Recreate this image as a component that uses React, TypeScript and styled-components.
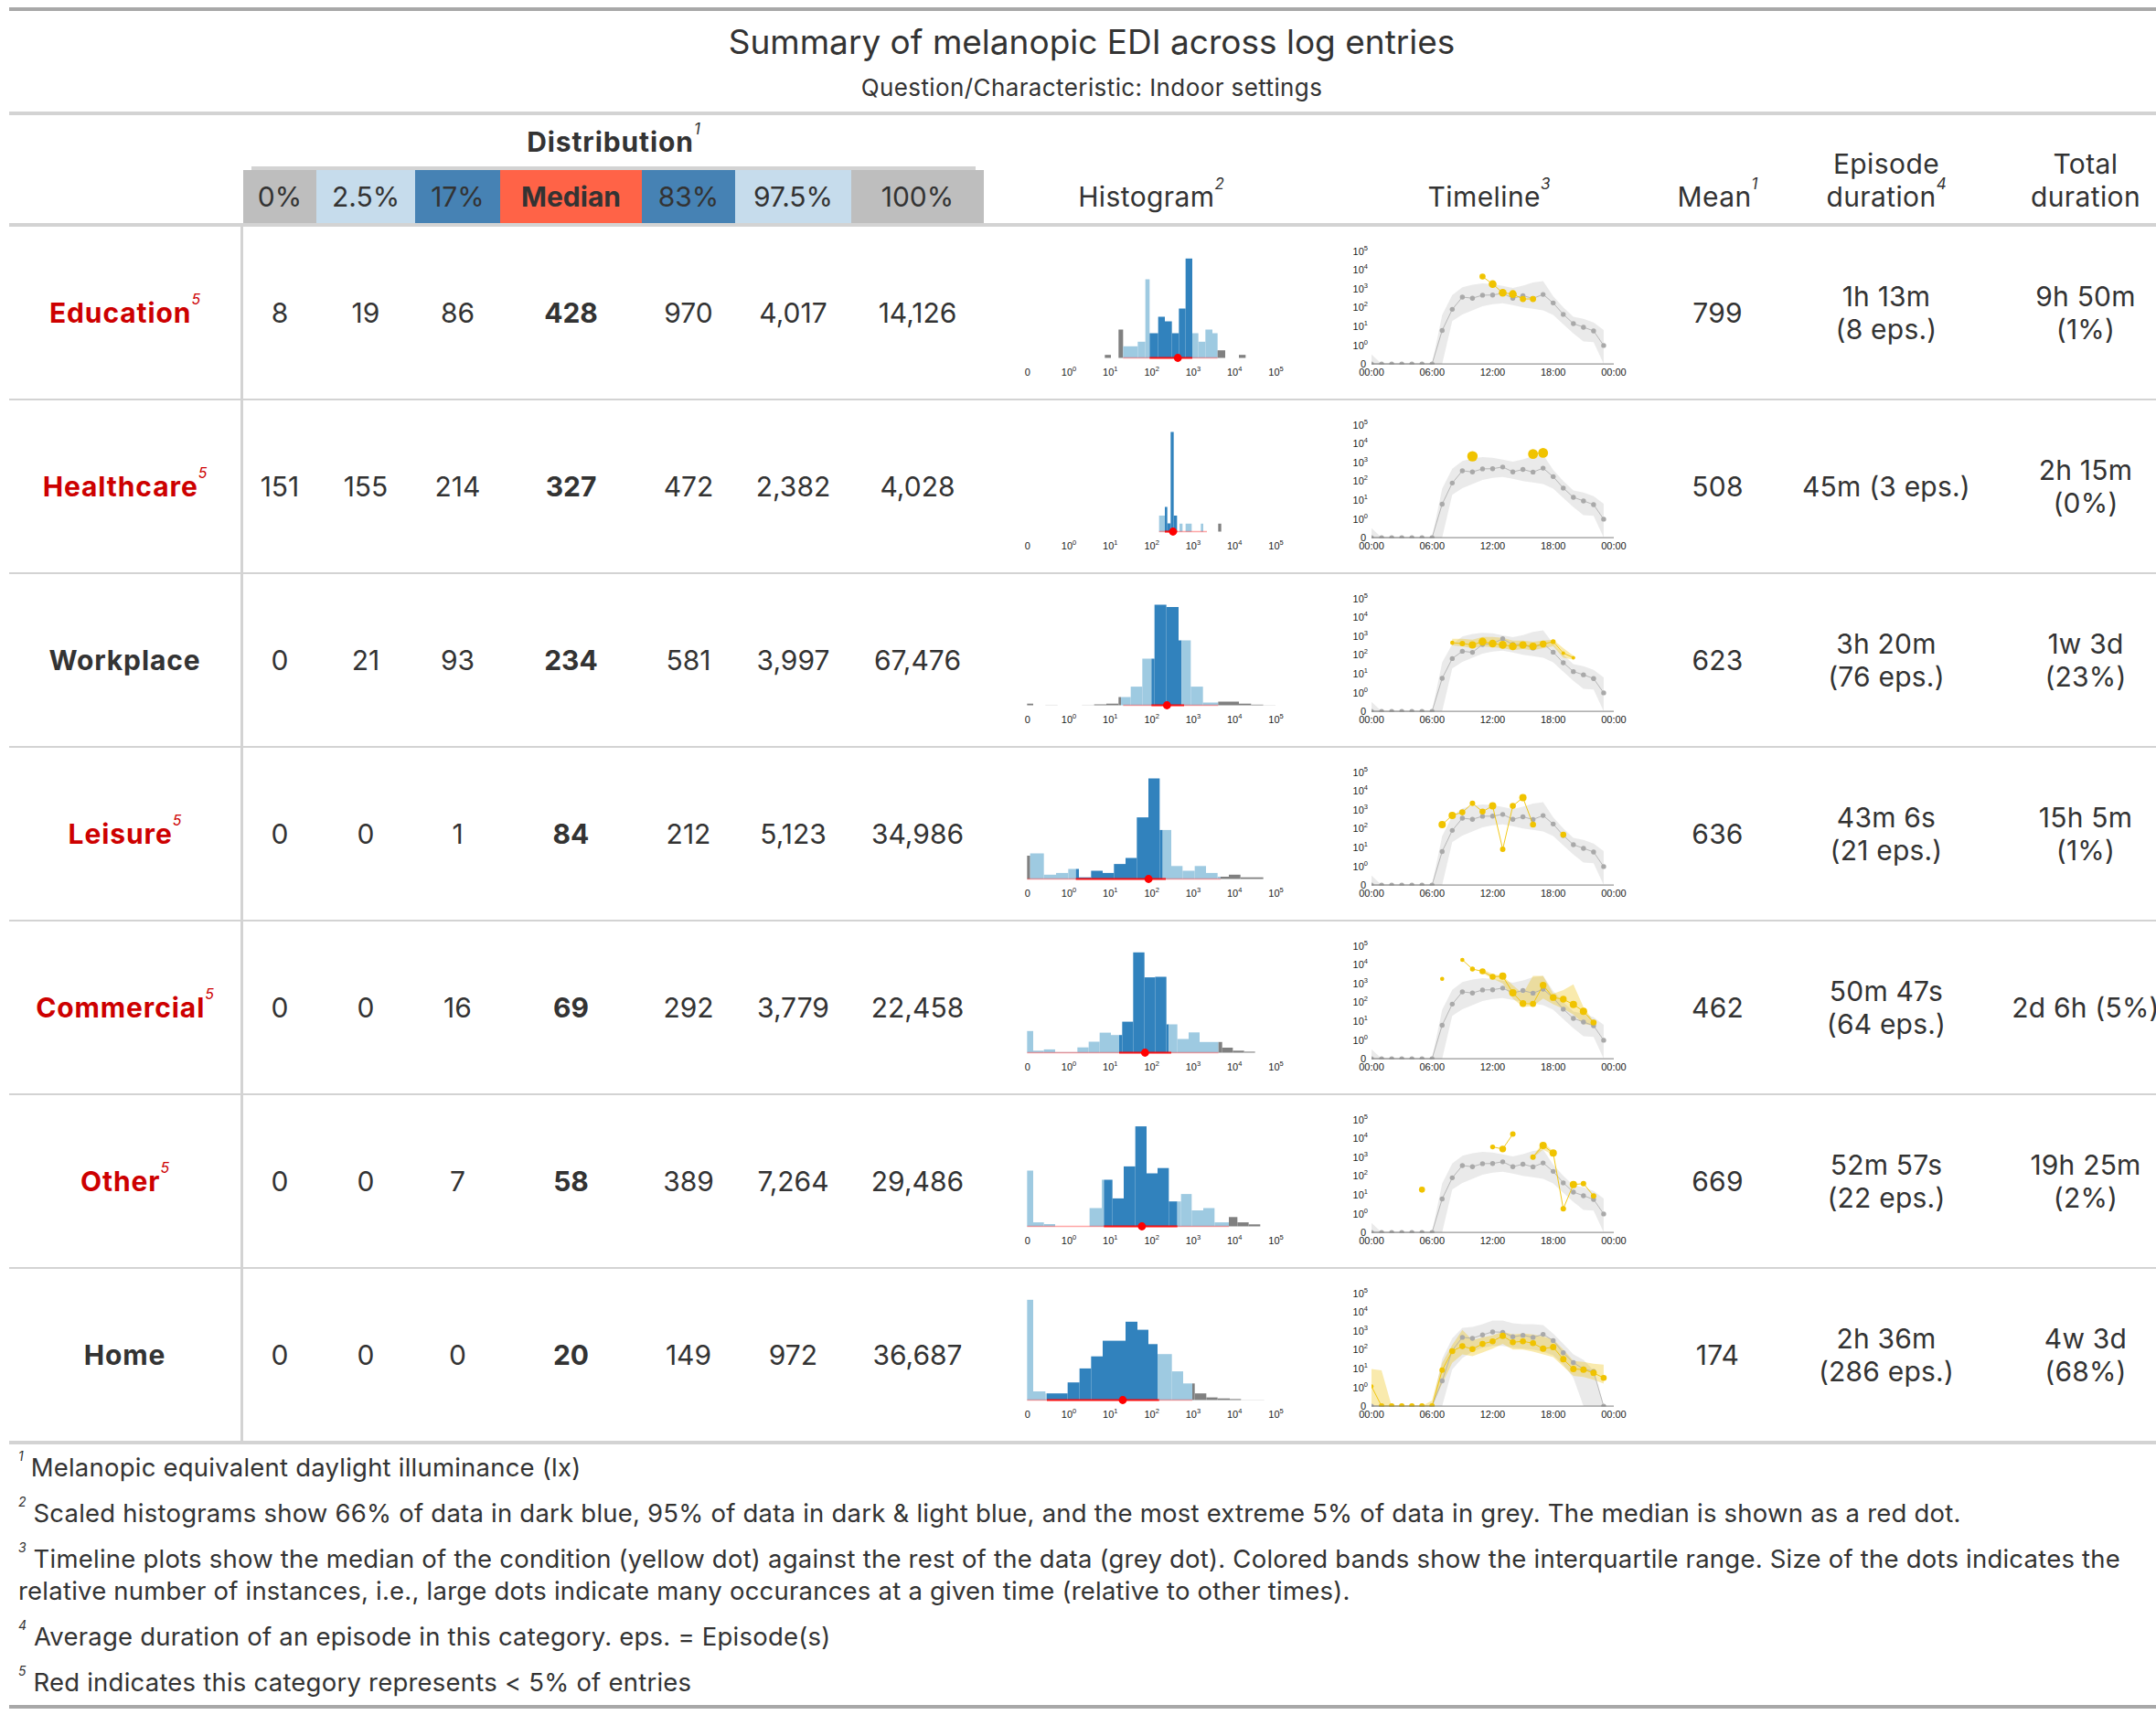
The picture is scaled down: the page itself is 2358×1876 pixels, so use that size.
import React from "react";
import styled, { createGlobalStyle } from "styled-components";

const GlobalStyle = createGlobalStyle`
  html, body { margin: 0; padding: 0; overflow: hidden; background: #ffffff; }
  body { font-family: Inter, "Noto Sans", "Liberation Sans", sans-serif; color: #333333; }
  * { box-sizing: border-box; }
`;

const COLS = "256px 80px 108px 93px 155px 102px 127px 145px 366px 373px 127px 242px 194px";

const Page = styled.div`
  padding: 8px 0 0 10px;
`;

const Table = styled.div`
  width: 2368px;
  border-top: 4px solid #a8a8a8;
  border-bottom: 4px solid #a8a8a8;
`;

const Heading = styled.div`
  text-align: center;
  border-bottom: 4px solid #d3d3d3;
  padding: 6px 0 8px;
`;

const Title = styled.div`
  font-size: 37px;
  line-height: 55px;
`;

const Subtitle = styled.div`
  font-size: 26px;
  line-height: 37px;
  letter-spacing: 0.4px;
  padding-top: 4px;
`;

const HeaderGrid = styled.div`
  display: grid;
  grid-template-columns: ${COLS};
  grid-template-rows: 60px 58px;
  border-bottom: 4px solid #d3d3d3;
  font-size: 30px;
  line-height: 36px;
`;

const Spanner = styled.div`
  grid-column: 2 / 9;
  grid-row: 1;
  align-self: end;
  padding: 0 9px;
`;

const SpannerLabel = styled.div`
  font-weight: 700;
  text-align: center;
  letter-spacing: 0.9px;
  padding-bottom: 9px;
  border-bottom: 4px solid #d3d3d3;
`;

const QuantLabel = styled.div<{ $bg: string; $bold?: boolean; $col: number }>`
  grid-row: 2;
  grid-column: ${(p) => p.$col};
  background: ${(p) => p.$bg};
  font-weight: ${(p) => (p.$bold ? 700 : 400)};
  display: flex;
  align-items: center;
  justify-content: center;
`;

const ColLabel = styled.div<{ $col: number }>`
  grid-row: 1 / 3;
  grid-column: ${(p) => p.$col};
  align-self: end;
  text-align: center;
  letter-spacing: 0.4px;
  padding-bottom: 11px;
`;

const Mark = styled.span<{ $size?: number; $raise?: number }>`
  font-size: ${(p) => p.$size ?? 17}px;
  font-style: italic;
  font-weight: 400;
  letter-spacing: 0;
  line-height: 0;
  vertical-align: ${(p) => p.$raise ?? 19}px;
  white-space: nowrap;
`;

const BodyRow = styled.div`
  display: grid;
  grid-template-columns: ${COLS};
  height: 190px;
  border-bottom: 2px solid #d3d3d3;
  font-size: 30px;
  line-height: 36px;
`;

const StubCell = styled.div<{ $rare: boolean }>`
  border-right: 3px solid #d3d3d3;
  display: flex;
  align-items: center;
  justify-content: center;
  font-weight: 700;
  letter-spacing: 0.9px;
  color: ${(p) => (p.$rare ? "#cd0000" : "#333333")};
`;

const ValueCell = styled.div<{ $bold?: boolean }>`
  display: flex;
  align-items: center;
  justify-content: center;
  font-weight: ${(p) => (p.$bold ? 700 : 400)};
`;

const ChartCell = styled.div<{ $pad: number }>`
  display: flex;
  align-items: flex-start;
  padding-left: ${(p) => p.$pad}px;
`;

const TextCell = styled.div`
  display: flex;
  align-items: center;
  justify-content: center;
  text-align: center;
  white-space: nowrap;
  letter-spacing: 0.2px;
`;

const ChartSvg = styled.svg`
  display: block;
  overflow: visible;
`;

const Footnotes = styled.div`
  border-top: 2px solid #d3d3d3;
  font-size: 27.5px;
  line-height: 35px;
  letter-spacing: 0.22px;
`;

const Footnote = styled.div`
  padding: 8px 10px 7px 10px;
`;

/* ---------------- data ---------------- */

type Bar = [number, number, number, "d" | "l" | "g" | "f"];

interface HistData {
  bars: Bar[];
  thin: [number, number];
  thick: [number, number];
  median: number;
}

type YPoint = [number, number, number];

interface TimeData {
  grey: number[];
  gUp: number[];
  gLo: number[];
  yellow: YPoint[];
  yBand?: { start: number; up: number[]; lo: number[] };
}

interface RowData {
  name: string;
  rare: boolean;
  q: string[];
  mean: string;
  episode: string[];
  total: string[];
  hist: HistData;
  time: TimeData;
}

const G_BASE = [-1, -1, -1, -1, -1, -1, -1, 0.78, 1.9, 2.55, 2.49, 2.65, 2.66, 2.75, 2.49, 2.62, 2.48, 2.69, 2.24, 1.63, 1.14, 0.95, 0.75, -0.02];
const U_BASE = [-0.5, -1, -1, -1, -1, -1, -1, 1.6, 2.66, 3.07, 3.2, 3.27, 3.24, 3.14, 3.04, 3.15, 3.32, 3.4, 2.6, 2.0, 1.5, 1.4, 1.2, 0.8];
const L_BASE = [-1, -1, -1, -1, -1, -1, -1, -1, 1.27, 1.63, 1.85, 2.06, 2.17, 2.22, 2.12, 2.0, 1.93, 1.85, 1.6, 1.1, 0.62, 0.2, 0.16, -1];

const G_WORK = [-1, -1, -1, -1, -1, -1, -1, 0.75, 1.8, 2.19, 2.13, 2.55, 2.6, 2.85, 2.55, 2.55, 2.36, 2.6, 2.14, 1.58, 1.11, 0.94, 0.74, -0.02];
const U_WORK = U_BASE.map((v, i) => (i >= 8 && i <= 17 ? v - 0.1 : v));

const G_HOME = [-1, -1, -1, -1, -1, -1, -1, 0.34, 1.95, 2.65, 2.6, 2.78, 2.94, 2.92, 2.68, 2.76, 2.65, 2.81, 2.48, 1.83, 1.31, 0.97, 0.84, -1];
const U_HOME = [-1, -1, -1, -1, -1, -1, -1, 1.5, 2.6, 3.15, 3.2, 3.35, 3.55, 3.55, 3.4, 3.35, 3.35, 3.3, 2.85, 2.3, 1.75, 1.45, 0.9, -1];
const L_HOME = [-1, -1, -1, -1, -1, -1, -1, -1, 0.95, 1.55, 1.9, 2.1, 2.2, 2.2, 2.1, 2.05, 2.0, 1.9, 1.7, 1.2, 0.5, -1, -1, -1];

const ROWS: RowData[] = [
  {
    name: "Education",
    rare: true,
    q: ["8", "19", "86", "428", "970", "4,017", "14,126"],
    mean: "799",
    episode: ["1h 13m", "(8 eps.)"],
    total: ["9h 50m", "(1%)"],
    hist: {
      bars: [
        [325, 345, 3.3, "g"], [370, 385, 31, "g"], [385, 433, 12.7, "l"], [433, 458, 17.7, "l"],
        [458, 472, 86, "l"], [472, 500, 27, "d"], [500, 522, 45, "d"], [522, 545, 40, "d"],
        [545, 568, 27, "d"], [568, 590, 54, "d"], [590, 612, 108.7, "d"], [612, 632, 27, "l"],
        [632, 655, 17.7, "l"], [655, 678, 31, "l"], [678, 695, 27, "l"], [695, 720, 8.3, "g"],
        [765, 787, 3.3, "g"],
      ],
      thin: [385, 695],
      thick: [472, 612],
      median: 428,
    },
    time: {
      grey: G_BASE,
      gUp: U_BASE,
      gLo: L_BASE,
      yellow: [[11, 3.64, 3.3], [12, 3.24, 4.3], [13, 2.78, 4.3], [14, 2.71, 4.3], [15, 2.45, 3.4], [16, 2.45, 3.4]],
    },
  },
  {
    name: "Healthcare",
    rare: true,
    q: ["151", "155", "214", "327", "472", "2,382", "4,028"],
    mean: "508",
    episode: ["45m (3 eps.)"],
    total: ["2h 15m", "(0%)"],
    hist: {
      bars: [
        [503, 522, 17.5, "l"], [522, 530, 27, "d"], [530, 541, 9, "d"], [541, 551, 109, "d"],
        [551, 562, 17.5, "d"], [570, 580, 8.7, "l"], [590, 610, 8.7, "l"], [640, 648, 8.7, "l"],
        [697, 707, 8.7, "g"],
      ],
      thin: [503, 660],
      thick: [522, 562],
      median: 327,
    },
    time: {
      grey: G_BASE,
      gUp: U_BASE,
      gLo: L_BASE,
      yellow: [[10, 3.32, 5.7], [16, 3.44, 5.4], [17, 3.5, 5.4]],
    },
  },
  {
    name: "Workplace",
    rare: false,
    q: ["0", "21", "93", "234", "581", "3,997", "67,476"],
    mean: "623",
    episode: ["3h 20m", "(76 eps.)"],
    total: ["1w 3d", "(23%)"],
    hist: {
      bars: [
        [70, 90, 1.8, "g"], [130, 170, 0.6, "f"], [250, 290, 0.6, "f"], [290, 330, 1, "g"],
        [330, 370, 1.8, "g"], [370, 378, 9, "g"], [378, 410, 9, "l"], [410, 448, 20.4, "l"],
        [448, 478, 51, "l"], [478, 488, 51, "d"], [488, 527, 110, "d"], [527, 567, 107.5, "d"],
        [567, 577, 71, "d"], [577, 607, 71, "l"], [607, 647, 20.4, "l"], [647, 697, 3, "l"],
        [697, 765, 4, "g"], [765, 805, 1.8, "g"], [805, 845, 0.7, "g"], [845, 885, 0.5, "f"],
      ],
      thin: [385, 697],
      thick: [478, 585],
      median: 234,
    },
    time: {
      grey: G_WORK,
      gUp: U_WORK,
      gLo: L_BASE,
      yellow: [
        [8, 2.64, 2.3], [9, 2.6, 3], [10, 2.53, 4], [11, 2.7, 4.3], [12, 2.6, 4.3], [13, 2.53, 4.3],
        [14, 2.45, 4.3], [15, 2.53, 4], [16, 2.45, 4], [17, 2.57, 3.7], [18, 2.7, 2.7], [19, 2.09, 2],
        [20, 1.85, 2],
      ],
      yBand: {
        start: 8,
        up: [2.85, 2.85, 2.8, 2.95, 2.95, 2.9, 2.75, 2.75, 2.7, 2.75, 2.8, 2.35, 1.95],
        lo: [2.5, 2.45, 2.35, 2.45, 2.4, 2.35, 2.25, 2.3, 2.25, 2.35, 2.45, 1.85, 1.75],
      },
    },
  },
  {
    name: "Leisure",
    rare: true,
    q: ["0", "0", "1", "84", "212", "5,123", "34,986"],
    mean: "636",
    episode: ["43m 6s", "(21 eps.)"],
    total: ["15h 5m", "(1%)"],
    hist: {
      bars: [
        [70, 80, 25.5, "g"], [80, 125, 28, "l"], [125, 165, 4.7, "l"], [165, 205, 6.6, "l"],
        [205, 230, 11, "l"], [230, 240, 11, "d"], [240, 280, 1.8, "d"], [280, 318, 9, "d"],
        [318, 355, 6.6, "d"], [355, 393, 16.4, "d"], [393, 430, 23, "d"], [430, 468, 67.4, "d"],
        [468, 505, 110, "d"], [505, 515, 53.6, "d"], [515, 543, 53.6, "l"], [543, 580, 14.2, "l"],
        [580, 620, 9, "l"], [620, 657, 14.2, "l"], [657, 695, 6.6, "l"], [695, 705, 2.5, "l"],
        [705, 732, 2.5, "g"], [732, 770, 4.7, "g"], [770, 845, 1.8, "g"],
      ],
      thin: [70, 705],
      thick: [230, 525],
      median: 84,
    },
    time: {
      grey: G_BASE,
      gUp: U_BASE,
      gLo: L_BASE,
      yellow: [
        [7, 2.21, 4], [8, 2.7, 4], [9, 2.86, 3.3], [10, 3.34, 3], [11, 2.9, 3.3], [12, 3.2, 4],
        [13, 0.9, 3], [14, 3.2, 3.3], [15, 3.64, 4], [16, 2.21, 3.3], [19, 1.67, 3.3],
      ],
    },
  },
  {
    name: "Commercial",
    rare: true,
    q: ["0", "0", "16", "69", "292", "3,779", "22,458"],
    mean: "462",
    episode: ["50m 47s", "(64 eps.)"],
    total: ["2d 6h (5%)"],
    hist: {
      bars: [
        [70, 90, 23.7, "l"], [90, 125, 2.2, "l"], [125, 162, 3.6, "l"], [162, 235, 0.7, "l"],
        [235, 272, 5.8, "l"], [272, 308, 12, "l"], [308, 345, 21.9, "l"], [345, 372, 19.3, "l"],
        [372, 382, 19.3, "d"], [382, 418, 33.9, "d"], [418, 455, 109.7, "d"], [455, 490, 82.4, "d"],
        [490, 527, 83, "d"], [527, 535, 31, "d"], [535, 563, 31, "l"], [563, 600, 15, "l"],
        [600, 636, 22.2, "l"], [636, 698, 11.7, "l"], [698, 710, 11.7, "g"], [710, 745, 5.5, "g"],
        [745, 782, 2.2, "g"], [782, 818, 1.1, "g"],
      ],
      thin: [70, 698],
      thick: [372, 543],
      median: 69,
    },
    time: {
      grey: G_BASE,
      gUp: U_BASE,
      gLo: L_BASE,
      yellow: [
        [7, 3.24, 2.3], [9, 4.25, 2.3], [10, 3.76, 2.7], [11, 3.64, 3.3], [12, 3.35, 3.3], [13, 3.38, 4],
        [14, 2.5, 4], [15, 1.93, 3.7], [16, 1.91, 3.3], [17, 2.9, 3.7], [18, 2.25, 3.7], [19, 2.16, 3.7],
        [20, 1.88, 4], [21, 1.52, 4], [22, 0.92, 3.3],
      ],
      yBand: {
        start: 11,
        up: [3.75, 3.5, 3.4, 2.9, 2.45, 3.4, 3.4, 2.45, 2.65, 2.95, 1.75, 1.0],
        lo: [3.55, 3.25, 3.0, 2.2, 1.75, 1.8, 2.2, 1.9, 1.65, 1.35, 0.85, 0.75],
      },
    },
  },
  {
    name: "Other",
    rare: true,
    q: ["0", "0", "7", "58", "389", "7,264", "29,486"],
    mean: "669",
    episode: ["52m 57s", "(22 eps.)"],
    total: ["19h 25m", "(2%)"],
    hist: {
      bars: [
        [70, 90, 61, "l"], [90, 125, 4.4, "l"], [125, 162, 2.5, "l"], [275, 315, 20, "l"],
        [315, 322, 51, "l"], [322, 350, 51, "d"], [350, 387, 30.6, "d"], [387, 425, 65.6, "d"],
        [425, 462, 109.4, "d"], [462, 498, 58, "d"], [498, 535, 63.8, "d"], [535, 563, 27.3, "d"],
        [563, 575, 27.3, "l"], [575, 610, 35.4, "l"], [610, 648, 17.5, "l"], [648, 685, 20, "l"],
        [685, 732, 4.4, "l"], [732, 760, 10.2, "g"], [760, 797, 4.4, "g"], [797, 835, 2.2, "g"],
      ],
      thin: [70, 732],
      thick: [322, 563],
      median: 58,
    },
    time: {
      grey: G_BASE,
      gUp: U_BASE,
      gLo: L_BASE,
      yellow: [
        [5, 1.27, 3.3], [12, 3.54, 2.7], [13, 3.43, 3.7], [14, 4.22, 3], [16, 3.0, 3], [17, 3.62, 4],
        [18, 3.21, 4], [19, 0.26, 3], [20, 1.54, 4], [21, 1.59, 3], [22, 0.94, 3],
      ],
      yBand: { start: 16, up: [3.05, 3.8, 3.3], lo: [2.95, 3.4, 3.1] },
    },
  },
  {
    name: "Home",
    rare: false,
    q: ["0", "0", "0", "20", "149", "972", "36,687"],
    mean: "174",
    episode: ["2h 36m", "(286 eps.)"],
    total: ["4w 3d", "(68%)"],
    hist: {
      bars: [
        [70, 90, 109.7, "l"], [90, 130, 9.5, "l"], [130, 135, 7.3, "l"], [135, 203, 7.3, "d"],
        [203, 242, 19.3, "d"], [242, 280, 34.6, "d"], [280, 318, 47.8, "d"], [318, 393, 64.9, "d"],
        [393, 432, 85.7, "d"], [432, 468, 76.9, "d"], [468, 498, 61.2, "d"], [498, 545, 50.3, "l"],
        [545, 582, 31.4, "l"], [582, 612, 18.2, "l"], [612, 620, 18.2, "g"], [620, 658, 7.3, "g"],
        [658, 695, 2.9, "g"], [695, 735, 1.8, "g"], [735, 772, 1.1, "g"], [772, 848, 0.5, "f"],
      ],
      thin: [70, 612],
      thick: [135, 503],
      median: 20,
    },
    time: {
      grey: G_HOME,
      gUp: U_HOME,
      gLo: L_HOME,
      yellow: [
        [0, 0.05, 2.3], [1, -1, 3], [2, -1, 3], [3, -1, 3], [4, -1, 3], [5, -1, 3], [6, -1, 3],
        [7, 0.91, 3], [8, 1.92, 3.3], [9, 2.18, 3.3], [10, 2.03, 3.3], [11, 2.3, 3.3], [12, 2.44, 3.3],
        [13, 2.73, 3.5], [14, 2.39, 3.3], [15, 2.44, 3.3], [16, 2.34, 3.3], [17, 2.05, 3.5], [18, 2.13, 3.5],
        [19, 1.49, 3.5], [20, 0.97, 3.5], [21, 0.94, 3.5], [22, 0.76, 3.5], [23, 0.5, 3.3],
      ],
      yBand: {
        start: 0,
        up: [0.97, 0.9, -1, -1, -1, -1, -0.7, 1.3, 2.25, 3.05, 2.5, 2.65, 2.75, 2.95, 2.8, 2.85, 2.8, 2.7, 2.55, 2.0, 1.4, 1.35, 1.25, 1.2],
        lo: [-1, -1, -1, -1, -1, -1, -1, 0.2, 1.3, 1.75, 1.65, 1.85, 2.05, 2.3, 2.0, 2.0, 1.9, 1.75, 1.6, 1.1, 0.6, 0.55, 0.4, 0.2],
      },
    },
  },
];

const QUANTS: { label: string; bg: string; bold?: boolean }[] = [
  { label: "0%", bg: "#bebebe" },
  { label: "2.5%", bg: "#c6dcec" },
  { label: "17%", bg: "#4682b4" },
  { label: "Median", bg: "#ff6347", bold: true },
  { label: "83%", bg: "#4682b4" },
  { label: "97.5%", bg: "#c6dcec" },
  { label: "100%", bg: "#bebebe" },
];

const BAR_COLORS: Record<string, string> = {
  d: "#3182bd",
  l: "#9ecae1",
  g: "#808080",
  f: "#dcdcdc",
};

/* ---------------- charts ---------------- */

const AXIS_FONT = "'Liberation Sans', Arial, sans-serif";
const H_BASE = 143.5;
const hx = (L: number) => 69 + 45.3 * L;

function Histogram({ d }: { d: HistData }) {
  const mx = hx(Math.log10(d.median));
  return (
    <ChartSvg width={340} height={188} viewBox="0 0 340 188">
      {d.bars.map(([a, b, h, c], i) => (
        <rect key={i} x={a / 3} y={H_BASE - h} width={(b - a) / 3} height={h} fill={BAR_COLORS[c]} />
      ))}
      <line x1={d.thin[0] / 3} x2={d.thin[1] / 3} y1={H_BASE} y2={H_BASE} stroke="rgba(255,0,0,0.35)" strokeWidth={1.4} />
      <line x1={d.thick[0] / 3} x2={d.thick[1] / 3} y1={H_BASE} y2={H_BASE} stroke="rgba(255,0,0,0.85)" strokeWidth={2.2} />
      <circle cx={mx} cy={H_BASE} r={4.4} fill="#ff0000" />
      <g fontFamily={AXIS_FONT} fontSize={11} fill="#1a1a1a" textAnchor="middle">
        <text x={hx(-1)} y={163}>0</text>
        {[0, 1, 2, 3, 4, 5].map((L) => (
          <text key={L} x={hx(L)} y={163}>
            10<tspan dy={-5} fontSize={7.5}>{L}</tspan>
          </text>
        ))}
      </g>
    </ChartSvg>
  );
}

const tx = (h: number) => 40 + 11.04 * h;
const ty = (L: number) => 129.5 - 20.6 * L;

function bandPath(start: number, up: number[], lo: number[]) {
  const top = up.map((v, i) => `${tx(start + i).toFixed(1)},${ty(v).toFixed(1)}`);
  const bottom = lo
    .map((v, i) => `${tx(start + i).toFixed(1)},${ty(v).toFixed(1)}`)
    .reverse();
  return [...top, ...bottom].join(" ");
}

function Timeline({ d, id }: { d: TimeData; id: string }) {
  const yellowSegs: [YPoint, YPoint][] = [];
  for (let i = 1; i < d.yellow.length; i++) {
    if (d.yellow[i][0] - d.yellow[i - 1][0] === 1) yellowSegs.push([d.yellow[i - 1], d.yellow[i]]);
  }
  const clipId = `tl-clip-${id}`;
  return (
    <ChartSvg width={340} height={188} viewBox="0 0 340 188">
      <defs>
        <clipPath id={clipId}>
          <rect x={40} y={0} width={270} height={ty(-1) + 0.5} />
        </clipPath>
      </defs>
      <g clipPath={`url(#${clipId})`}>
        <polygon points={bandPath(0, d.gUp, d.gLo)} fill="rgba(180,180,180,0.28)" />
        {d.yBand && (
          <polygon points={bandPath(d.yBand.start, d.yBand.up, d.yBand.lo)} fill="rgba(236,190,0,0.32)" />
        )}
        <polyline
          points={d.grey.map((v, h) => `${tx(h).toFixed(1)},${ty(v).toFixed(1)}`).join(" ")}
          fill="none"
          stroke="#a9a9a9"
          strokeWidth={0.8}
        />
        {d.grey.map((v, h) => (
          <circle key={h} cx={tx(h)} cy={ty(v)} r={2.7} fill="#a9a9a9" />
        ))}
        {yellowSegs.map(([a, b], i) => (
          <line key={i} x1={tx(a[0])} y1={ty(a[1])} x2={tx(b[0])} y2={ty(b[1])} stroke="#f0c300" strokeWidth={0.9} />
        ))}
        {d.yellow.map(([h, v, r], i) => (
          <circle key={i} cx={tx(h)} cy={ty(v)} r={r} fill="#f0c300" />
        ))}
      </g>
      <line x1={40} x2={305} y1={ty(-1)} y2={ty(-1)} stroke="#6e6e6e" strokeWidth={0.9} />
      <g fontFamily={AXIS_FONT} fontSize={11} fill="#1a1a1a">
        <text x={34} y={ty(-1) + 4} textAnchor="end">0</text>
        {[0, 1, 2, 3, 4, 5].map((L) => (
          <text key={L} x={36} y={ty(L) + 4} textAnchor="end">
            10<tspan dy={-5} fontSize={7.5}>{L}</tspan>
          </text>
        ))}
        {["00:00", "06:00", "12:00", "18:00", "00:00"].map((t, i) => (
          <text key={i} x={tx(i * 6)} y={163} textAnchor="middle">{t}</text>
        ))}
      </g>
    </ChartSvg>
  );
}

/* ---------------- page ---------------- */

function Lines({ lines }: { lines: string[] }) {
  return (
    <>
      {lines.map((l, i) => (
        <React.Fragment key={i}>
          {i > 0 && <br />}
          {l}
        </React.Fragment>
      ))}
    </>
  );
}

export default function App() {
  return (
    <>
      <GlobalStyle />
      <Page>
        <Table>
          <Heading>
            <Title>Summary of melanopic EDI across log entries</Title>
            <Subtitle>Question/Characteristic: Indoor settings</Subtitle>
          </Heading>
          <HeaderGrid>
            <Spanner>
              <SpannerLabel>
                Distribution<Mark>1</Mark>
              </SpannerLabel>
            </Spanner>
            {QUANTS.map((q, i) => (
              <QuantLabel key={q.label} $bg={q.bg} $bold={q.bold} $col={i + 2}>
                {q.label}
              </QuantLabel>
            ))}
            <ColLabel $col={9}>
              Histogram<Mark>2</Mark>
            </ColLabel>
            <ColLabel $col={10}>
              Timeline<Mark>3</Mark>
            </ColLabel>
            <ColLabel $col={11}>
              Mean<Mark>1</Mark>
            </ColLabel>
            <ColLabel $col={12}>
              Episode
              <br />
              duration<Mark>4</Mark>
            </ColLabel>
            <ColLabel $col={13}>
              Total
              <br />
              duration
            </ColLabel>
          </HeaderGrid>
          {ROWS.map((r, ri) => (
            <BodyRow key={r.name}>
              <StubCell $rare={r.rare}>
                <span>
                  {r.name}
                  {r.rare && <Mark $size={16} $raise={20}>5</Mark>}
                </span>
              </StubCell>
              {r.q.map((v, i) => (
                <ValueCell key={i} $bold={i === 3}>
                  {v}
                </ValueCell>
              ))}
              <ChartCell $pad={24}>
                <Histogram d={r.hist} />
              </ChartCell>
              <ChartCell $pad={18}>
                <Timeline d={r.time} id={String(ri)} />
              </ChartCell>
              <TextCell>{r.mean}</TextCell>
              <TextCell>
                <span>
                  <Lines lines={r.episode} />
                </span>
              </TextCell>
              <TextCell>
                <span>
                  <Lines lines={r.total} />
                </span>
              </TextCell>
            </BodyRow>
          ))}
          <Footnotes>
            <Footnote>
              <Mark $size={14} $raise={17}>1</Mark> Melanopic equivalent daylight illuminance (lx)
            </Footnote>
            <Footnote>
              <Mark $size={14} $raise={17}>2</Mark> Scaled histograms show 66% of data in dark blue, 95% of data in dark &amp; light blue, and the most extreme 5% of data in grey. The median is shown as a red dot.
            </Footnote>
            <Footnote>
              <Mark $size={14} $raise={17}>3</Mark> Timeline plots show the median of the condition (yellow dot) against the rest of the data (grey dot). Colored bands show the interquartile range. Size of the dots indicates the relative number of instances, i.e., large dots indicate many occurances at a given time (relative to other times).
            </Footnote>
            <Footnote>
              <Mark $size={14} $raise={17}>4</Mark> Average duration of an episode in this category. eps. = Episode(s)
            </Footnote>
            <Footnote>
              <Mark $size={14} $raise={17}>5</Mark> Red indicates this category represents &lt; 5% of entries
            </Footnote>
          </Footnotes>
        </Table>
      </Page>
    </>
  );
}
